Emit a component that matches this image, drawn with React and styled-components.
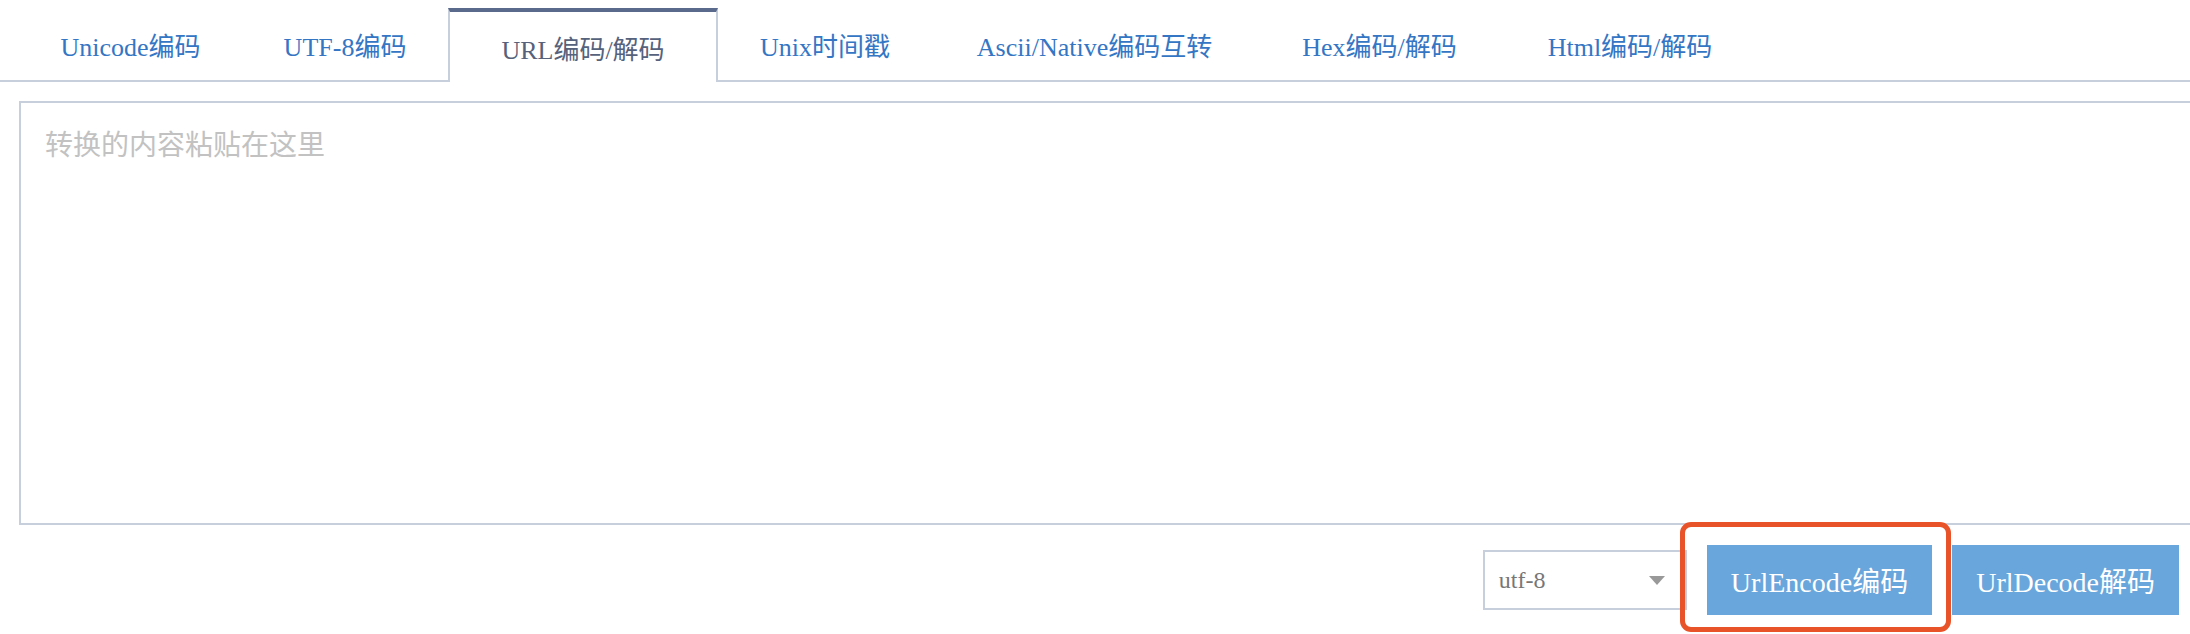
import styled, { createGlobalStyle } from 'styled-components';

const GlobalStyle = createGlobalStyle`
  html, body {
    margin: 0;
    padding: 0;
    background: #fff;
    overflow: hidden;
  }
  body {
    font-family: "Liberation Serif", "Noto Sans CJK SC", serif;
  }
`;

const Page = styled.div`
  width: 2190px;
  height: 634px;
  overflow: hidden;
`;

const TabBar = styled.ul`
  display: flex;
  margin: 8px 0 0;
  padding: 0 0 0 19px;
  list-style: none;
  height: 72px;
  border-bottom: 2px solid #c8cfdc;
`;

const Tab = styled.li`
  display: flex;
  align-items: center;
  justify-content: center;
  box-sizing: border-box;
  width: ${(p) => p.$width}px;
  font-size: 26px;
  color: ${(p) => (p.$active ? '#56627b' : '#3576c4')};
  background: #fff;
  white-space: nowrap;
  cursor: pointer;
  ${(p) =>
    p.$active &&
    `
    border: 2px solid #c8cfdc;
    border-top: 4px solid #5a6a8c;
    border-bottom: none;
    margin-bottom: -2px;
    height: 74px;
  `}
`;

const Editor = styled.textarea`
  display: block;
  box-sizing: border-box;
  margin: 19px 0 0 19px;
  width: 2200px;
  height: 424px;
  padding: 20px 24px;
  border: 2px solid #c8cfdc;
  outline: none;
  resize: none;
  font-family: "Noto Sans CJK SC", sans-serif;
  font-size: 28px;
  line-height: 40px;
  color: #333;

  &::placeholder {
    color: #c2c2c2;
  }
`;

const Actions = styled.div`
  display: flex;
  justify-content: flex-end;
  align-items: center;
  gap: 20px;
  margin-top: 20px;
  padding-right: 11px;
`;

const SelectBox = styled.div`
  display: flex;
  align-items: center;
  justify-content: space-between;
  box-sizing: border-box;
  width: 204px;
  height: 60px;
  padding: 0 20px 0 14px;
  border: 2px solid #c8cfdc;
  font-size: 24px;
  color: #777;
`;

const Caret = styled.span`
  width: 0;
  height: 0;
  border-left: 8px solid transparent;
  border-right: 8px solid transparent;
  border-top: 9px solid #999;
`;

const Highlight = styled.div`
  position: relative;
`;

const Marker = styled.span`
  position: absolute;
  left: -27px;
  right: -19px;
  top: -23px;
  bottom: -17px;
  border: 5px solid #e9532a;
  border-radius: 11px;
  pointer-events: none;
`;

const Button = styled.button`
  display: block;
  height: 70px;
  padding: 0 24px;
  border: none;
  background: #69a6dc;
  color: #fff;
  font-family: "Liberation Serif", "Noto Sans CJK SC", serif;
  font-size: 28px;
  cursor: pointer;
`;

const tabs = [
  { label: 'Unicode编码', width: 223 },
  { label: 'UTF-8编码', width: 206 },
  { label: 'URL编码/解码', width: 270 },
  { label: 'Unix时间戳', width: 214 },
  { label: 'Ascii/Native编码互转', width: 325 },
  { label: 'Hex编码/解码', width: 245 },
  { label: 'Html编码/解码', width: 256 },
];

const App = () => (
  <>
    <GlobalStyle />
    <Page>
      <TabBar>
        {tabs.map((t, i) => (
          <Tab key={t.label} $width={t.width} $active={i === 2}>
            {t.label}
          </Tab>
        ))}
      </TabBar>
      <Editor placeholder="转换的内容粘贴在这里" />
      <Actions>
        <SelectBox>
          <span>utf-8</span>
          <Caret />
        </SelectBox>
        <Highlight>
          <Button>UrlEncode编码</Button>
          <Marker />
        </Highlight>
        <Button>UrlDecode解码</Button>
      </Actions>
    </Page>
  </>
);

export default App;
